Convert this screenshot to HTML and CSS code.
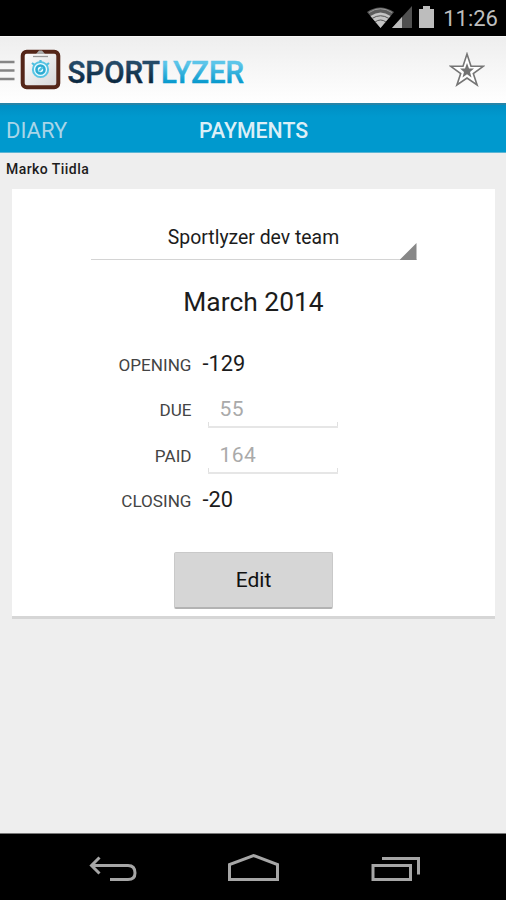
FILE: index.html
```html
<!DOCTYPE html>
<html lang="en">
<head>
<meta charset="utf-8">
<title>Sportlyzer</title>
<link rel="stylesheet" href="styles.css">
</head>
<body>
<div class="screen">
  <div class="status">
    <svg class="status-icons" width="72" height="36" viewBox="0 0 72 36">
      <path d="M0 12Q13 3 27 12L13.500 28Z" fill="#5c5c5c"/>
      <path d="M3.500 16Q13.500 9 23.500 16L13.500 28Z" fill="#c4c4c4"/>
      <path d="M5 18.500Q13.500 13 22 18.500M8 22Q13.500 18 19 22" fill="none" stroke="#555" stroke-width="1"/>
      <path d="M2 12.500Q13.500 5 25 12.500" fill="none" stroke="#999" stroke-width="1"/>
      <path d="M25 28L45 6V28Z" fill="#505050"/>
      <path d="M25 28L35 17V28Z" fill="#bdbdbd"/>
      <path d="M52 9H56V6H63V9H67V28H52Z" fill="#bdbdbd"/>
    </svg>
    <span class="clock">11:26</span>
  </div>
  <header class="bar">
    <svg class="brand" width="260" height="66" viewBox="0 0 260 66">
      <defs>
        <linearGradient id="navy" x1="0" y1="0" x2="0" y2="1"><stop offset=".3" stop-color="#244a67"/><stop offset=".8" stop-color="#0a263e"/></linearGradient>
        <linearGradient id="sky" x1="0" y1="0" x2="0" y2="1"><stop offset=".3" stop-color="#5cc5e9"/><stop offset=".8" stop-color="#0799cd"/></linearGradient>
        <linearGradient id="paper" x1="0" y1="0" x2="1" y2="1"><stop offset="0" stop-color="#fff"/><stop offset="1" stop-color="#d5d5d7"/></linearGradient>
      </defs>
      <path d="M0 25H14.500M0 33.500H14.500M0 42H14.500" stroke="#858585" stroke-width="2.400"/>
      <rect x="22.700" y="14.700" width="35.600" height="35.600" rx="4" fill="url(#paper)" stroke="#542619" stroke-width="4"/>
      <path d="M36 17L39 13.500H42L45 17Z" fill="#aaa"/>
      <path d="M33 19.500H48" stroke="#999" stroke-width="1.300"/>
      <circle cx="40.500" cy="32.500" r="7.600" fill="#eafaff" stroke="#58c5e4" stroke-width="2"/>
      <circle cx="40.500" cy="32.500" r="4" fill="none" stroke="#2cabd2" stroke-width="2.600"/>
      <path d="M39 34L42.500 30.500M40.500 23V25.500M32 26L34.500 28M49 26L46.500 28" stroke="#4dbfe0" stroke-width="2.200"/>
      <text class="logo" x="67.500" y="45.500" textLength="92.500" lengthAdjust="spacingAndGlyphs" fill="url(#navy)" stroke="url(#navy)">SPORT</text>
      <text class="logo" x="161" y="45.500" textLength="83" lengthAdjust="spacingAndGlyphs" fill="url(#sky)" stroke="url(#sky)">LYZER</text>
    </svg>
    <svg class="star" width="36" height="36" viewBox="0 0 36 36">
      <path d="M18 2L22 14.300H34.200L24.300 21.600L28.100 33L18 26L7.900 33L11.700 21.600L1.800 14.300H14Z" fill="#fff" stroke="#757575" stroke-width="1.600"/>
      <path d="M18 11L20 16.500H25L21 19.900L22.500 25.500L18 22.200L13.500 25.500L15 19.900L11 16.500H16Z" fill="#737373"/>
    </svg>
  </header>
  <nav class="tabs">
    <span class="tab">DIARY</span>
    <span class="tab current">PAYMENTS</span>
  </nav>
  <main class="content">
    <div class="member">Marko Tiidla</div>
    <section class="card">
      <div class="team"><span>Sportlyzer dev team</span></div>
      <h1 class="month">March 2014</h1>
      <div class="sheet">
        <span class="label">OPENING</span><span class="value">-129</span>
        <span class="label">DUE</span><span class="field">55</span>
        <span class="label">PAID</span><span class="field">164</span>
        <span class="label">CLOSING</span><span class="value">-20</span>
      </div>
      <button class="edit">Edit</button>
    </section>
  </main>
  <footer class="nav">
    <svg width="506" height="66" viewBox="0 0 506 66" fill="none" stroke="#a6a6a6" stroke-width="3">
      <path d="M99.500 22.500L91.500 30.500L99.500 38.500M92 30.500H128Q135 30.500 135 38Q135 44.500 128 44.500H110"/>
      <path d="M229.500 44.500V29.500L253.500 20.500L277.500 29.500V44.500Z"/>
      <path d="M373 30.500H410.500V44.500H373ZM382 23.500H418.500V39.500"/>
    </svg>
  </footer>
</div>
</body>
</html>
```
FILE: styles.css
```css
* { box-sizing: border-box; }
body { margin: 0; font-family: Roboto, "Liberation Sans", sans-serif; color: #1c1c1c; }
.screen { width: 506px; height: 900px; display: flex; flex-direction: column; background: #eee; overflow: hidden; }
.status { height: 36px; background: #000; display: flex; justify-content: flex-end; align-items: center; padding-right: 8px; }
.status-icons { margin-right: 4px; }
.clock { font-size: 22px; line-height: 36px; color: #bebebe; padding-top: 2px; }
.bar { height: 67px; display: flex; justify-content: space-between; align-items: flex-start; padding-right: 21px; background: linear-gradient(#eee, #fff); border-top: 1px solid #f8f8f8; }
.brand { overflow: visible; }
.logo { font: 500 32px Roboto, sans-serif; stroke-width: .5px; }
.star { margin-top: 15px; }
.tabs { height: 50px; display: flex; align-items: center; background: linear-gradient(#008fc4, #0099ce 12px); border-top: 2px solid #2785a8; border-bottom: 1px solid #5cb5d4; padding: 3px 0 0 6px; }
.tab { width: 193px; font-size: 22px; color: #a9d5e8; }
.current { font-size: 21.3px; font-weight: 500; color: #dceff7; }
.content { flex: 1; padding: 0 11px 0 12px; }
.member { height: 36px; margin-left: -6px; font-size: 14px; font-weight: 500; line-height: 33px; letter-spacing: .45px; }
.card { height: 430px; background: #fff; border-bottom: 3px solid #d6d6d6; display: flex; flex-direction: column; align-items: center; }
.team { width: 326px; height: 71px; padding-top: 37px; border-bottom: 1px solid #d4d4d4; display: flex; justify-content: center; font-size: 19.4px; line-height: 24px; position: relative; }
.team::after { content: ""; position: absolute; right: 0; bottom: -1px; width: 17px; height: 17px; background: #888; clip-path: polygon(100% 0, 100% 100%, 0 100%); }
.month { margin: 25px 0 0; font-size: 26.4px; font-weight: 400; line-height: 34px; }
.sheet { width: 326px; margin-top: 23px; display: grid; grid-template-columns: 101px 1fr; grid-auto-rows: 45.3px; column-gap: 11px; }
.label { text-align: right; font-size: 17.1px; line-height: 47px; color: #444; }
.value { font-size: 21.8px; line-height: 44px; }
.field { width: 130px; height: 41px; margin-left: 5px; padding-left: 12px; font-size: 21px; line-height: 44px; letter-spacing: .4px; color: #aaa; background: linear-gradient(#e0e0e0, #e0e0e0) 0 100% / 1px 4px no-repeat, linear-gradient(#e0e0e0, #e0e0e0) 100% 100% / 1px 4px no-repeat; border-bottom: 2px solid #e6e6e6; }
.edit { width: 159px; height: 57px; margin-top: 29px; padding: 0; font: 400 21px Roboto, sans-serif; color: #111; background: #d6d6d6; border: 1px solid #c9c9c9; border-bottom: 2px solid #b3b3b3; border-radius: 2px; }
.nav { height: 67px; background: #000; border-top: 1px solid #777; }
.nav svg { display: block; margin-top: 1px; }
```
